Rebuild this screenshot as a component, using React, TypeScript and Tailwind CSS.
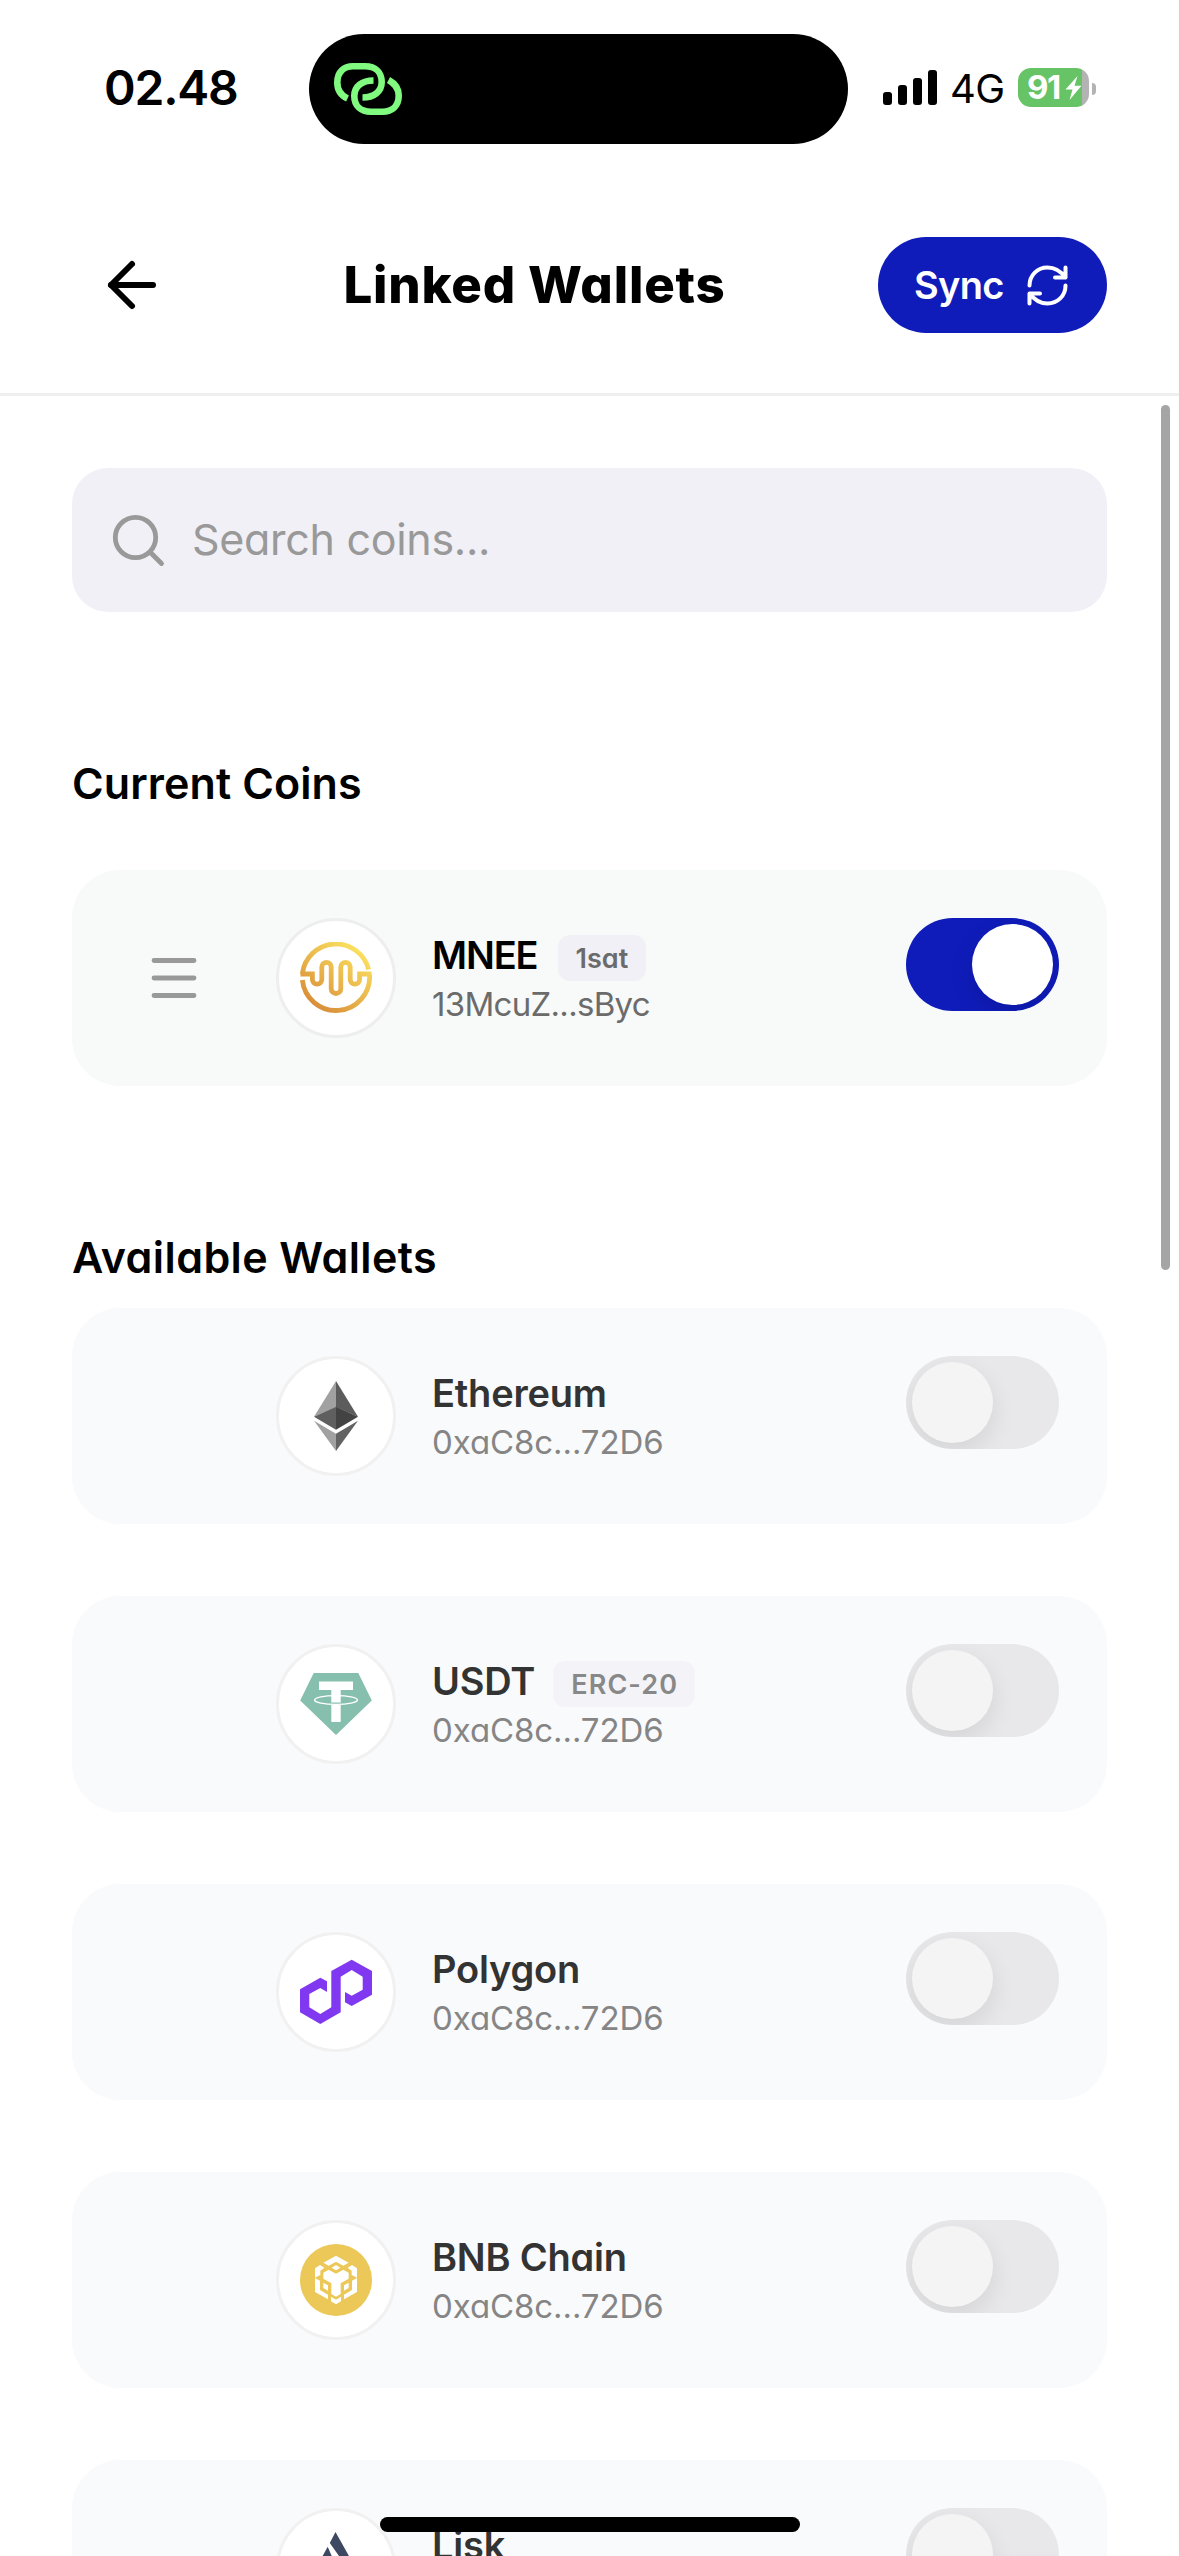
import { useState, type ReactNode } from "react";
import { ArrowLeft } from "lucide-react";
import clsx from "clsx";

type Wallet = {
  id: string;
  name: string;
  address: string;
  tag?: string;
  logo: ReactNode;
};

function MneeLogo() {
  return (
    <svg viewBox="0 0 72 72" className="size-18" fill="none" stroke="url(#mnee)" strokeWidth="4.8">
      <defs>
        <linearGradient id="mnee" gradientUnits="userSpaceOnUse" x1="14" y1="64" x2="58" y2="8">
          <stop offset="0" stopColor="#d98e38" />
          <stop offset="1" stopColor="#fadf60" />
        </linearGradient>
      </defs>
      <path d="M2.4 32A33.7 33.7 0 0 1 68.6 27.5" />
      <path d="M0.5 32H12.4V37.5a4.7 4.7 0 0 0 9.4 0V25a4.7 4.7 0 0 1 9.4 0V46.7a4.8 4.8 0 0 0 9.6 0V25a4.7 4.7 0 0 1 9.4 0V37.5a4.7 4.7 0 0 0 9.4 0V32H71.5" />
      <path d="M2.4 38A33.7 33.7 0 0 0 69.6 33" />
    </svg>
  );
}

function EthereumLogo() {
  return (
    <svg viewBox="0 0 72 72" className="size-18">
      <path fill="#a1a1a1" d="M36 1v26L14 36.7z" />
      <path fill="#5c5c5c" d="M36 1v26l22 9.7z" />
      <path fill="#5f5f5f" d="M36 26.7v23L14 36.7z" />
      <path fill="#434343" d="M36 26.7v23l22-13z" />
      <path fill="#a1a1a1" d="M14 40.7l22 13V71z" />
      <path fill="#636363" d="M58 40.7l-22 13V71z" />
    </svg>
  );
}

function TetherLogo() {
  return (
    <svg viewBox="0 0 72 72" className="size-18">
      <path fill="#86bfad" d="M13.7 5h44.6L71.8 32.5 36 67 .2 32.5z" />
      <path fill="#fff" d="M19 13.4h34V22H40.7v12.6h-9.4V22H19zM31.3 37h9.4v17h-9.4z" />
      <ellipse cx="36" cy="32" rx="21.4" ry="4.4" fill="none" stroke="#fff" strokeWidth="1.4" />
    </svg>
  );
}

function PolygonLogo() {
  return (
    <svg viewBox="0 0 72 72" className="size-18">
      <path
        fill="#8039f0"
        d="M20.3 21.7L27 25.3V36L20.3 32 9.3 38V51.3L20.3 58 31.3 51.3V15L51.7 3.7 72 15V38.7L51.7 50 45 46.3V36L51.7 39.7 62.7 33.7V20.7L51.7 14 40.7 20.7V56.3L20.3 68 0 56.3V33.3z"
      />
    </svg>
  );
}

function BnbLogo() {
  return (
    <svg viewBox="0 0 216 216" className="size-18">
      <circle cx="108" cy="108" r="108" fill="#ebc857" />
      <g fill="#fff">
        <path d="M108 35l38 21-16 9-22-12-22 12-16-9z" />
        <path d="M108 63l13 8-13 8-13-8z" />
        <path d="M45 73l15-10 13 8-12 9v13l-16 8z" />
        <path d="M171 73l-15-10-13 8 12 9v13l16 8z" />
        <path d="M86 77l22 12 22-12 16 9v18l-24 14v32l-14 8-14-8v-32l-24-14V86z" />
        <path d="M45 102l15 8v28l24 14v14l-39-22z" />
        <path d="M171 102l-15 8v28l-24 14v14l39-22z" />
        <path d="M70 116l14 8v16l-14-8z" />
        <path d="M146 116l-14 8v16l14-8z" />
        <path d="M93 158l15 9 15-9v14l-15 9-15-9z" />
      </g>
    </svg>
  );
}

function LiskLogo() {
  return (
    <svg viewBox="0 0 72 72" className="size-18" fill="#3d4863">
      <path d="M35.5 0L68 58 56 71H34L45 57 39 24 29.8 11z" />
      <path d="M27.7 14.7L36 34 22 58h9l-8 13h-7L4 58z" />
    </svg>
  );
}

const CURRENT: Wallet[] = [
  { id: "mnee", name: "MNEE", address: "13McuZ...sByc", tag: "1sat", logo: <MneeLogo /> },
];

const AVAILABLE: Wallet[] = [
  { id: "eth", name: "Ethereum", address: "0xaC8c...72D6", logo: <EthereumLogo /> },
  { id: "usdt", name: "USDT", address: "0xaC8c...72D6", tag: "ERC-20", logo: <TetherLogo /> },
  { id: "polygon", name: "Polygon", address: "0xaC8c...72D6", logo: <PolygonLogo /> },
  { id: "bnb", name: "BNB Chain", address: "0xaC8c...72D6", logo: <BnbLogo /> },
  { id: "lisk", name: "Lisk", address: "0xaC8c...72D6", logo: <LiskLogo /> },
];

function StatusBar() {
  return (
    <div className="flex h-[177px] items-start pt-[34px]">
      <div className="flex h-[110px] w-[309px] items-center pb-[2px] pl-[104px] text-[48px] font-semibold">
        <span className="tracking-[-1.2px]">02.48</span>
      </div>
      <div className="flex h-[110px] w-[539px] items-center rounded-full bg-black pl-[24px]">
        <svg width="70" height="54" viewBox="0 0 70 54" fill="none" stroke="#80fb80" strokeWidth="6.6">
          <path d="M14.5 36.5C8 33.5 4.3 28.5 4.3 20.5C4.3 10 11 4.3 20 4.3H32C43 4.3 48.7 11 48.7 20C48.7 29.5 41 35.5 29.5 35.5" />
          <path d="M40.5 18.5C29 18.5 21.3 24.5 21.3 34C21.3 44 28 49.7 38 49.7H49.5C59 49.7 65.7 44 65.7 33.5C65.7 26.5 62 21.5 55.5 18" />
        </svg>
      </div>
      <div className="flex h-[110px] items-center pl-[35px]">
        <div className="mt-[-3px] flex h-[35px] items-end gap-[6px]">
          <i className="h-[13px] w-[9px] rounded-[3px] bg-black" />
          <i className="h-[20px] w-[9px] rounded-[3px] bg-black" />
          <i className="h-[27px] w-[9px] rounded-[3px] bg-black" />
          <i className="h-[35px] w-[9px] rounded-[3px] bg-black" />
        </div>
        <span className="ml-[13px] w-[55px] text-[40px] tracking-[-0.5px]">4G</span>
        <div className="mt-[-3px] ml-[13px] flex h-[39px] w-[71px] items-center rounded-[13px] bg-[linear-gradient(to_right,#67c466_64px,#b3b3b3_64px)] pl-[9px] text-[33px] font-bold text-white">
          <span className="w-[38px] tracking-[-1.4px]">91</span>
          <svg width="17" height="24" viewBox="0 0 17 24" fill="#fff">
            <path d="M12.5 0L0.5 13.5H7.5L4.5 24L16.5 9.8H9.5z" />
          </svg>
        </div>
        <i className="mt-[-1px] ml-[3px] h-[12px] w-[4px] rounded-r-full bg-[#b3b3b3]" />
      </div>
    </div>
  );
}

function Header() {
  return (
    <header className="flex h-[219px] items-center border-b-[3px] border-[#efefef] pr-18 pl-24">
      <button type="button" aria-label="Back">
        <ArrowLeft size={72} strokeWidth={2} />
      </button>
      <h1 className="flex-1 pl-[23px] text-center text-[51px] font-extrabold tracking-[0.8px]">Linked Wallets</h1>
      <button
        type="button"
        className="flex h-24 w-[229px] items-center justify-between rounded-full bg-[#0f1cba] pr-[37px] pl-[36px] text-[38px] font-semibold tracking-[-0.7px] text-white"
      >
        Sync
        <svg width="45" height="45" viewBox="0 0 45 45" fill="none" stroke="#fff" strokeWidth="4" strokeLinecap="round" strokeLinejoin="round">
          <path d="M4.5 22.5C4.5 12 12.5 4.500 22.5 4.5C30 4.5 36 8.5 40.5 14.5M40.5 4.5V14.5H30" />
          <path d="M40.5 22.5C40.5 33 32.5 40.5 22.5 40.5C15 40.5 9 36.5 4.5 30.5M4.5 40.5V30.5H15" />
        </svg>
      </button>
    </header>
  );
}

function Toggle({ on, onChange }: { on: boolean; onChange: () => void }) {
  return (
    <button
      type="button"
      role="switch"
      aria-checked={on}
      onClick={onChange}
      className={clsx(
        "flex h-[93px] w-[153px] overflow-hidden rounded-full p-[6px]",
        on ? "justify-end bg-[#0f1cba]" : "bg-[#e8e8ea]"
      )}
    >
      <span
        className={clsx(
          "size-[81px] rounded-full",
          on ? "bg-white shadow-[0_9px_24px_rgba(0,0,0,0.12)]" : "bg-[#f4f4f4] shadow-[0_9px_24px_rgba(0,0,0,0.09)]"
        )}
      />
    </button>
  );
}

function WalletCard({ wallet, active }: { wallet: Wallet; active?: boolean }) {
  const [on, setOn] = useState(!!active);

  return (
    <li className={clsx("flex h-[216px] items-start rounded-[48px] p-12", active ? "bg-[#f8faf9]" : "bg-[#f9fafc]")}>
      <div className="mr-12 flex h-[120px] w-[108px] items-center justify-center">
        {active && (
          <svg width="46" height="40" viewBox="0 0 46 40" stroke="#999" strokeWidth="4.8" strokeLinecap="round">
            <path d="M3 2.5H43M3 20H43M3 37.5H43" />
          </svg>
        )}
      </div>
      <div
        className={clsx(
          "flex size-[120px] items-center justify-center rounded-full border-[3px] bg-white",
          active ? "border-[#eee]" : "border-[#f1f1f1]"
        )}
      >
        {wallet.logo}
      </div>
      <div className="flex-1 pt-[14px] pl-9">
        <div className="flex h-[46px] items-start">
          <span
            className={clsx(
              "text-[38px] leading-[46px] font-semibold",
              active ? "tracking-[-1.1px] text-black" : "tracking-[-0.2px] text-[#333]"
            )}
          >
            {wallet.name}
          </span>
          {wallet.tag && (
            <span
              className={clsx(
                "mt-[3px] h-[46px] rounded-[12px] text-[27px] leading-[48px] font-semibold",
                active
                  ? "ml-[20px] bg-[#f1f0f6] px-[18px] text-[#6b6b6b]"
                  : "ml-[18px] bg-[#f4f3f8] pr-[17px] pl-[18px] tracking-[1.1px] text-[#888]"
              )}
            >
              {wallet.tag}
            </span>
          )}
        </div>
        <div
          className={clsx(
            "mt-[6px] text-[33px] leading-[40px]",
            active ? "tracking-[-0.7px] text-[#6b6b6b]" : "tracking-[-0.1px] text-[#858585]"
          )}
        >
          {wallet.address}
        </div>
      </div>
      <Toggle on={on} onChange={() => setOn(!on)} />
    </li>
  );
}

export default function App() {
  return (
    <div className="relative h-[2556px] w-[1179px] overflow-hidden bg-white font-['Inter','Liberation_Sans',sans-serif] text-black [font-feature-settings:'cv11']">
      <StatusBar />
      <Header />

      <main className="px-18 pt-18">
        <label className="flex h-36 items-center rounded-[36px] bg-[#f1f0f6] pl-[39px]">
          <svg width="54" height="54" viewBox="0 0 54 54" fill="none" stroke="#999" strokeWidth="4.8" strokeLinecap="round">
            <circle cx="24.5" cy="24.5" r="20.2" />
            <path d="M39 39L50.5 50.5" />
          </svg>
          <input
            type="text"
            placeholder="Search coins..."
            className="mb-[2px] ml-[27px] flex-1 bg-transparent text-[43px] tracking-[-0.3px] placeholder:text-[#999] focus:outline-none"
          />
        </label>

        <h2 className="mt-[144px] h-[54px] text-[43px] leading-[54px] font-semibold tracking-[0.1px]">Current Coins</h2>
        <ul className="mt-[60px]">
          {CURRENT.map((w) => (
            <WalletCard key={w.id} wallet={w} active />
          ))}
        </ul>

        <h2 className="mt-[144px] h-[54px] text-[43px] leading-[54px] font-semibold tracking-[0.4px]">Available Wallets</h2>
        <ul className="mt-[24px] flex flex-col gap-18">
          {AVAILABLE.map((w) => (
            <WalletCard key={w.id} wallet={w} />
          ))}
        </ul>
      </main>

      {/* scroll thumb and home indicator float over the list */}
      <div className="absolute top-[405px] right-[9px] h-[865px] w-[9px] rounded-full bg-[#a5a5a5]" />
      <div className="absolute bottom-[24px] left-[380px] h-[15px] w-[420px] rounded-full bg-black" />
    </div>
  );
}
